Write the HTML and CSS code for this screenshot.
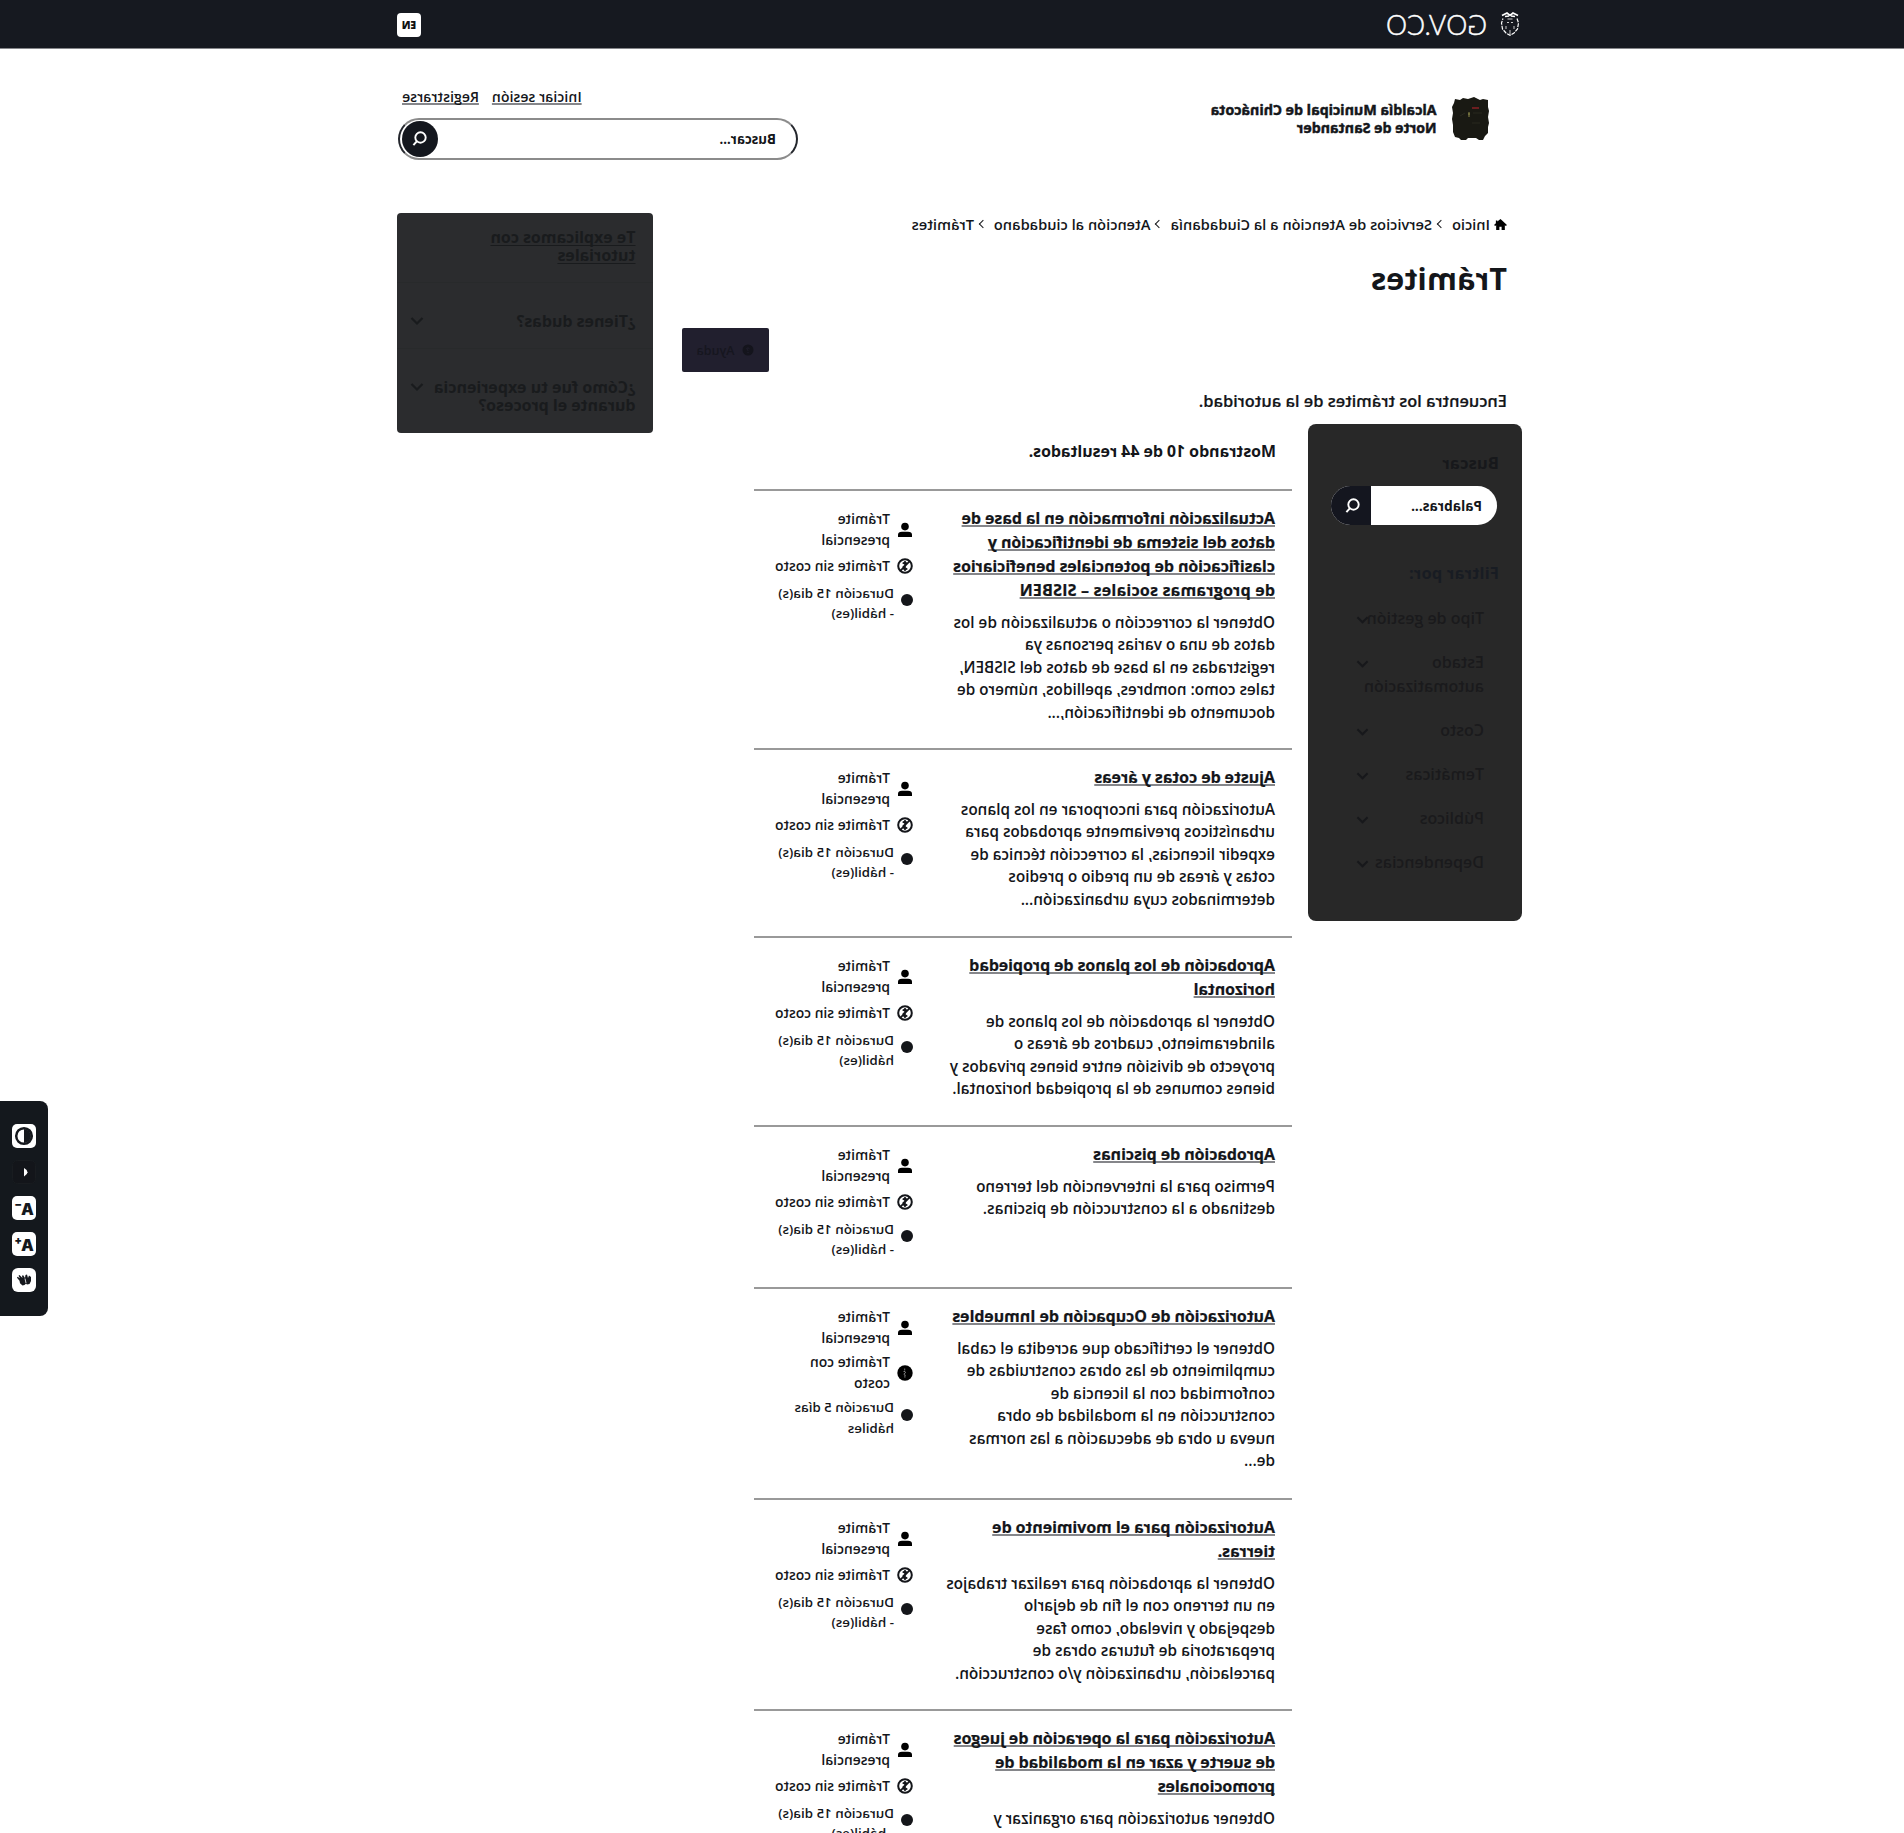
FILE: index.html
```html
<!DOCTYPE html>
<html lang="es">
<head>
<meta charset="utf-8">
<title>Trámites</title>
<link rel="stylesheet" href="styles.css">
</head>
<body>
<svg class="sprite" aria-hidden="true">
  <symbol id="search" viewBox="0 0 16 16"><circle cx="7.500" cy="6.500" r="5.200" fill="none" stroke="currentColor" stroke-width="1.900"/><path d="M11 10.200 14.600 14.200" stroke="currentColor" stroke-width="2"/></symbol>
  <symbol id="chevron" viewBox="0 0 14 10"><path d="M1.500 2 7 7.500 12.500 2" fill="none" stroke="currentColor" stroke-width="2.200"/></symbol>
  <symbol id="person" viewBox="0 0 16 16"><circle cx="8" cy="4.600" r="3.800"/><path d="M1 15v-2.200Q1 9.800 5 9.700h6q4 .1 4 3.100V15z"/></symbol>
  <symbol id="nocost" viewBox="0 0 16 16"><circle cx="8" cy="8" r="6.800" fill="none" stroke="currentColor" stroke-width="2"/><path d="M10.300 5.600Q8 3.800 6.400 5.300C5.200 7.300 10.700 7.600 10 10Q8.500 12.200 5.700 10.500M8 3v10M3.500 3.300l9.200 9.600" fill="none" stroke="currentColor" stroke-width="1.700"/></symbol>
  <symbol id="cost" viewBox="0 0 16 16"><circle cx="8" cy="8" r="7.700"/><path d="M8.300 3.500v2M9.500 6.500H8l-.5 1.300 1.500 1-.5 1.500H7.200M8.100 11v1.700" fill="none" stroke="#aaa" stroke-width=".7"/></symbol>
</svg>
<div class="page">
  <header class="topbar">
    <div class="gov">
      <svg class="coat" viewBox="0 0 20 24"><path d="M2 3.500 7 1l3 2.500L13 1l5 2.500M5 4.500l4-.5M11 4l4 .5" fill="none" stroke="#fff" stroke-width="1.700"/><path d="M3 6.500 1.500 11l1 6L6 21l4 2.300L14 21l3.500-4 1-6L17 6.500" fill="none" stroke="#fff" stroke-width="1.200" stroke-dasharray="4 1"/><path d="M7 10.500h2M11 10.500h2M10 18v5M6 14v3M14 14v3M7.500 7h5" stroke="#ccc" stroke-width="1"/></svg>
      <span class="gov-name">GOV.CO</span>
    </div>
    <button class="lang">EN</button>
  </header>

  <div class="brand">
    <svg class="shield" viewBox="0 0 42 46"><path d="M4 4 9 3 12 4 18 1 24 3 29 2 32 4 37 3 38 7 40 11 39 17 40 23 39 29 39 36 37 41 33 42 31 44 26 44 24 42 16 42 13 44 9 44 7 40 4 37 4 31 3 27 4 21 3 15 4 11z" fill="#191913"/><path d="M13 12h7" stroke="#9b2229" stroke-width="1.300"/><path d="M23 16v5M22 18h2" stroke="#8d8a4a" stroke-width="1"/><path d="M10 17h9M27 17l5 3M12 27h8" stroke="#28281f" stroke-width="1"/></svg>
    <div class="brand-name">Alcaldía Municipal de Chinácota<br>Norte de Santander</div>
    <div class="account">
      <nav class="links"><a>Iniciar sesión</a><a>Registrarse</a></nav>
      <div class="site-search"><span>Buscar...</span><i><svg><use href="#search"/></svg></i></div>
    </div>
  </div>

  <div class="main">
    <main>
      <nav class="crumbs">
        <svg class="home" viewBox="0 0 14 13"><path d="M7 0 0 6.500l1.200 1L2.300 6.700V12H5.800V8.500h2.400V12h3.500V6.700l1.100.8 1.200-1-2-1.900V1.500h-1.600v1.300z"/></svg>
        <span class="c1">Inicio</span><b></b><span class="c2">Servicios de Atención a la Ciudadanía</span><b></b><span class="c2">Atención al ciudadano</span><b></b><span class="c2">Trámites</span>
      </nav>
      <h1>Trámites</h1>
      <button class="help-btn"><svg viewBox="0 0 12 12"><circle cx="6" cy="6" r="5.500" fill="#14141c"/><path d="M4.500 4.800Q6 3 7.300 4.500 7.200 5.500 6 6.300V7M6 8v1.200" fill="none" stroke="#211f2e"/></svg>Ayuda</button>
      <p class="intro">Encuentra los trámites de la autoridad.</p>
      <div class="columns">
        <aside class="filters">
          <h2>Buscar</h2>
          <div class="filter-search"><span>Palabras...</span><i><svg><use href="#search"/></svg></i></div>
          <h2 class="by">Filtrar por:</h2>
          <ul>
            <li><span>Tipo de gestión</span><svg><use href="#chevron"/></svg></li>
            <li><span>Estado<br>automatización</span><svg><use href="#chevron"/></svg></li>
            <li><span>Costo</span><svg><use href="#chevron"/></svg></li>
            <li><span>Temáticas</span><svg><use href="#chevron"/></svg></li>
            <li><span>Públicos</span><svg><use href="#chevron"/></svg></li>
            <li><span>Dependencias</span><svg><use href="#chevron"/></svg></li>
          </ul>
        </aside>
        <section class="results">
          <p class="count">Mostrando 10 de 44 resultados.</p>
          <div class="list">
            <article>
              <div><h3>Actualización información en la base de<br>datos del sistema de identificación y<br>clasificación de potenciales beneficiarios<br><span class="wide">de programas sociales – SISBEN</span></h3>
              <p>Obtener la corrección o actualización de los<br>datos de una o varias personas ya<br>registradas en la base de datos del SISBEN,<br>tales como: nombres, apellidos, número de<br>documento de identificación,...</p></div>
              <ul class="meta"><li><svg><use href="#person"/></svg><span>Trámite<br>presencial</span></li><li><svg><use href="#nocost"/></svg><span>Trámite sin costo</span></li><li class="time"><i></i><span>Duración 15 dia(s)<br>- hábil(es)</span></li></ul>
            </article>
            <article>
              <div><h3>Ajuste de cotas y áreas</h3>
              <p>Autorización para incorporar en los planos<br>urbanísticos previamente aprobados para<br>expedir licencias, la corrección técnica de<br>cotas y áreas de un predio o predios<br>determinados cuya urbanización...</p></div>
              <ul class="meta"><li><svg><use href="#person"/></svg><span>Trámite<br>presencial</span></li><li><svg><use href="#nocost"/></svg><span>Trámite sin costo</span></li><li class="time"><i></i><span>Duración 15 dia(s)<br>- hábil(es)</span></li></ul>
            </article>
            <article>
              <div><h3>Aprobación de los planos de propiedad<br>horizontal</h3>
              <p>Obtener la aprobación de los planos de<br>alinderamiento, cuadros de áreas o<br>proyecto de división entre bienes privados y<br>bienes comunes de la propiedad horizontal.</p></div>
              <ul class="meta"><li><svg><use href="#person"/></svg><span>Trámite<br>presencial</span></li><li><svg><use href="#nocost"/></svg><span>Trámite sin costo</span></li><li class="time"><i></i><span>Duración 15 dia(s)<br>hábil(es)</span></li></ul>
            </article>
            <article>
              <div><h3>Aprobación de piscinas</h3>
              <p>Permiso para la intervención del terreno<br>destinado a la construcción de piscinas.</p></div>
              <ul class="meta"><li><svg><use href="#person"/></svg><span>Trámite<br>presencial</span></li><li><svg><use href="#nocost"/></svg><span>Trámite sin costo</span></li><li class="time"><i></i><span>Duración 15 dia(s)<br>- hábil(es)</span></li></ul>
            </article>
            <article>
              <div><h3>Autorización de Ocupación de Inmuebles</h3>
              <p>Obtener el certificado que acredita el cabal<br>cumplimiento de las obras construidas de<br>conformidad con la licencia de<br>construcción en la modalidad de obra<br>nueva u obra de adecuación a las normas<br>de...</p></div>
              <ul class="meta tight"><li><svg><use href="#person"/></svg><span>Trámite<br>presencial</span></li><li><svg><use href="#cost"/></svg><span>Trámite con<br>costo</span></li><li class="time"><i></i><span>Duración 5 días<br>hábiles</span></li></ul>
            </article>
            <article>
              <div><h3>Autorización para el movimiento de<br>tierras.</h3>
              <p>Obtener la aprobación para realizar trabajos<br>en un terreno con el fin de dejarlo<br>despejado y nivelado, como fase<br>preparatoria de futuras obras de<br>parcelación, urbanización y/o construcción.</p></div>
              <ul class="meta"><li><svg><use href="#person"/></svg><span>Trámite<br>presencial</span></li><li><svg><use href="#nocost"/></svg><span>Trámite sin costo</span></li><li class="time"><i></i><span>Duración 15 dia(s)<br>- hábil(es)</span></li></ul>
            </article>
            <article>
              <div><h3>Autorización para la operación de juegos<br>de suerte y azar en la modalidad de<br>promocionales</h3>
              <p>Obtener autorización para organizar y</p></div>
              <ul class="meta"><li><svg><use href="#person"/></svg><span>Trámite<br>presencial</span></li><li><svg><use href="#nocost"/></svg><span>Trámite sin costo</span></li><li class="time"><i></i><span>Duración 15 dia(s)<br>- hábil(es)</span></li></ul>
            </article>
          </div>
        </section>
      </div>
    </main>
    <aside class="help">
      <section class="tutorials"><a>Te explicamos con<br>tutoriales</a></section>
      <section class="doubts"><span>¿Tienes dudas?</span><svg><use href="#chevron"/></svg></section>
      <section class="feedback"><span>¿Cómo fue tu experiencia<br>durante el proceso?</span><svg><use href="#chevron"/></svg></section>
    </aside>
  </div>

  <div class="a11y">
    <svg viewBox="0 0 24 24"><rect width="24" height="24" rx="5" fill="#fff"/><circle cx="12" cy="12" r="7.800" fill="none" stroke="#15181d" stroke-width="2.500"/><path d="M12 5a7 7 0 0 0 0 14z" fill="#15181d"/></svg>
    <svg viewBox="0 0 24 24"><rect x=".5" y=".5" width="23" height="23" rx="5" fill="#13151a" stroke="#191c20"/><path d="M12 8v8.500Q8.500 14.500 8.500 12.200T12 8z" fill="#fff"/></svg>
    <div class="key">A<sup>−</sup></div>
    <div class="key">A<sup>+</sup></div>
    <svg viewBox="0 0 24 24"><rect width="24" height="24" rx="6" fill="#fff"/><path d="M5 9 7 7.500 8 10 9 6.500l1.500.5.500 3 2-3 1 1-.5 2 3-3 1 .8-1.500 2.500 2.500-1.500.5 1-2.500 3-.5 2.500-2.500 2.200-2-.5-1.500-1.500-1 1-2.500-.5-1.500-3z" fill="#15181d"/><path d="M11 10.500 10 15" stroke="#fff" stroke-width=".8"/></svg>
  </div>
</div>
</body>
</html>
```
FILE: styles.css
```css
* { box-sizing: border-box; }
body, h1, h2, h3, p, ul { margin: 0; padding: 0; }
ul { list-style: none; }
body { overflow: hidden; background: #fff; }
.sprite { display: none; }
.page {
  position: relative;
  width: 1904px;
  height: 1833px;
  overflow: hidden;
  background: #fff;
  color: #14161a;
  font-family: "Open Sans", "Noto Sans", sans-serif;
  font-size: 16px;
  white-space: nowrap;
  transform: scaleX(-1);
}
button { font-family: inherit; border: 0; padding: 0; }

/* Top bar */
.topbar {
  display: flex;
  justify-content: space-between;
  align-items: center;
  height: 49px;
  padding: 0 397px 0 384px;
  background: #161920;
  border-bottom: 1px solid #85868a;
}
.gov { display: flex; align-items: center; gap: 13px; }
.coat { width: 20px; height: 24px; }
.gov-name { color: #fff; font: 300 26.500px/30px Lato, sans-serif; letter-spacing: .3px; -webkit-text-stroke: .5px #fff; margin-top: 2px; }
.lang {
  width: 24px;
  height: 24px;
  margin-top: 1px;
  border-radius: 4px;
  background: #fff;
  color: #111;
  font-size: 10.500px;
  font-weight: 800;
  line-height: 22px;
}

/* Brand row */
.brand { display: flex; height: 163px; padding: 0 398px 0 412px; }
.shield { width: 42px; height: 46px; margin-top: 47px; }
.brand-name {
  margin: 51.500px 0 0 13.500px;
  font-size: 14.200px;
  font-weight: 700;
  line-height: 18px;
  -webkit-text-stroke: .5px #14161a;
}
.account { margin-left: auto; width: 400px; }
.links {
  display: flex;
  justify-content: flex-end;
  gap: 13px;
  margin: 38px 4px 0 0;
  font-size: 14px;
  font-weight: 600;
  line-height: 20px;
}
.links a { text-decoration: underline #85868a 2px; text-underline-offset: 1px; text-decoration-skip-ink: none; letter-spacing: .07px; }
.site-search {
  display: flex;
  justify-content: space-between;
  align-items: center;
  height: 42px;
  margin-top: 11px;
  padding: 0 2px 0 20px;
  border: 2px solid #23262c;
  border-top-color: #8b8b8b;
  border-bottom-color: #8b8b8b;
  border-radius: 21px;
  font-size: 13.300px;
  font-weight: 700;
}
.site-search i {
  display: flex;
  align-items: center;
  justify-content: center;
  width: 36px;
  height: 36px;
  border-radius: 50%;
  background: #14171e;
  color: #fff;
}
.site-search svg, .filter-search svg { width: 16px; height: 16px; }

/* Main columns */
.main { display: flex; align-items: flex-start; padding-left: 382px; }
main { width: 869px; }
.crumbs {
  display: flex;
  align-items: center;
  height: 20px;
  margin-top: 2px;
  padding-left: 15px;
  font-size: 14.600px;
  font-weight: 600;
}
.home { width: 13px; height: 12px; margin: 1px 4px 0 0; }
.crumbs .c2 { padding-left: 6px; }
.crumbs b {
  width: 6px;
  height: 6px;
  margin: 0 0 0 8px;
  border: solid #14161a;
  border-width: 1.500px 1.500px 0 0;
  transform: rotate(45deg);
}
h1 { margin: 24px 0 0 15px; font-size: 30.600px; line-height: 40px; font-weight: 700; }
.help-btn {
  display: flex;
  align-items: center;
  justify-content: center;
  gap: 8px;
  width: 87px;
  height: 44px;
  margin: 30px 0 0 753px;
  border-radius: 2px;
  background: #211f2e;
  color: #16161f;
  font-size: 12.500px;
  font-weight: 600;
}
.help-btn svg { width: 12px; height: 12px; }
.intro { margin: 17px 0 0 15px; font-size: 16.400px; line-height: 24px; font-weight: 600; -webkit-text-stroke: .2px #14161a; }
.columns { display: flex; align-items: flex-start; margin-top: 11px; }

/* Filters */
.filters {
  width: 214px;
  height: 497px;
  margin-right: 16px;
  padding: 27px 23px 0 24px;
  border-radius: 8px;
  background: #282828;
  color: #17181b;
}
.filters h2 { margin-left: -1px; font-size: 16.500px; line-height: 24px; font-weight: 700; letter-spacing: .15px; }
.filter-search {
  display: flex;
  align-items: center;
  justify-content: space-between;
  height: 39px;
  margin: 11px 0 36px 1px;
  padding-left: 15px;
  border-radius: 20px;
  overflow: hidden;
  background: #fff;
  color: #14161a;
  font-size: 13.700px;
  font-weight: 700;
}
.filter-search i {
  display: flex;
  align-items: center;
  justify-content: center;
  width: 40px;
  height: 39px;
  padding-right: 5px;
  background: #14161f;
  color: #fff;
}
.filters .by { color: #181c23; }
.filters ul { display: grid; gap: 20px; margin: 21px 0 0 14px; }
.filters li { display: flex; line-height: 24px; font-weight: 600; }
.filters li span { width: 115px; color: #1a1a1c; }
.filters li svg { flex: none; width: 13px; height: 10px; margin-top: 9px; }

/* Results */
.results { width: 538px; }
.count { margin: 15px 0 0 16px; font-weight: 700; line-height: 24px; letter-spacing: -.07px; }
.list { display: grid; grid-template-rows: 259px 188px 189px 162px 211px 211px 260px; margin-top: 26px; }
.list article {
  display: flex;
  padding: 15px 0 0 17px;
  border-top: 2px solid #999;
}
.list article > div { width: 362px; }
h3 {
  font-size: 16px;
  line-height: 24px;
  font-weight: 700;
  letter-spacing: -.09px;
  text-decoration: underline #85868a 2px;
  text-underline-offset: 1px;
  text-decoration-skip-ink: none;
  -webkit-text-stroke: .2px #14161a;
}
h3 .wide { letter-spacing: .2px; }
.list p { margin-top: 8.500px; font-size: 15.300px; line-height: 22.500px; font-weight: 600; }
.meta { display: flex; flex-direction: column; gap: 6px; margin-top: 3px; font-size: 13.850px; line-height: 20.500px; font-weight: 600; }
.meta.tight { gap: 4px; }
.meta li { display: flex; align-items: center; gap: 7px; }
.meta svg { width: 16px; height: 16px; }
.meta .time { gap: 7px; font-size: 13.350px; }
.meta .time i { width: 12px; height: 12px; margin: -6px 0 0 0; border-radius: 50%; background: #14161a; }

/* Help panel */
.help {
  width: 256px;
  height: 220px;
  margin-top: 1px;
  border-radius: 4px;
  background: #2b2c2e;
  color: #191b1d;
  font-weight: 700;
  line-height: 18px;
  letter-spacing: -.04px;
}
.help section { display: flex; justify-content: space-between; padding: 0 13px 0 17.500px; border-bottom: 1px solid #282a2b; }
.help .tutorials { height: 70px; padding-top: 15px; }
.help .doubts { height: 66px; padding-top: 29px; }
.help .feedback { height: 84px; padding-top: 29px; border: 0; }
.help a { text-decoration: underline; text-underline-offset: 2px; text-decoration-skip-ink: none; }
.help svg { width: 14px; height: 10px; margin-top: 4px; }

/* Accessibility bar floats above the page edge */
.a11y {
  position: absolute;
  top: 1101px;
  right: 0;
  display: grid;
  gap: 12px;
  width: 48px;
  height: 215px;
  padding: 23px 0 0 12px;
  align-content: start;
  border-radius: 8px 0 0 8px;
  background: #14181d;
}
.a11y svg { display: block; width: 24px; height: 24px; }
.key {
  display: flex;
  justify-content: center;
  width: 24px;
  height: 24px;
  border-radius: 5px;
  background: #fff;
  color: #14181d;
  font: 900 16px/26px Inter, sans-serif;
}
.key sup { font-size: 11px; line-height: 16px; margin-left: -1px; }
```
